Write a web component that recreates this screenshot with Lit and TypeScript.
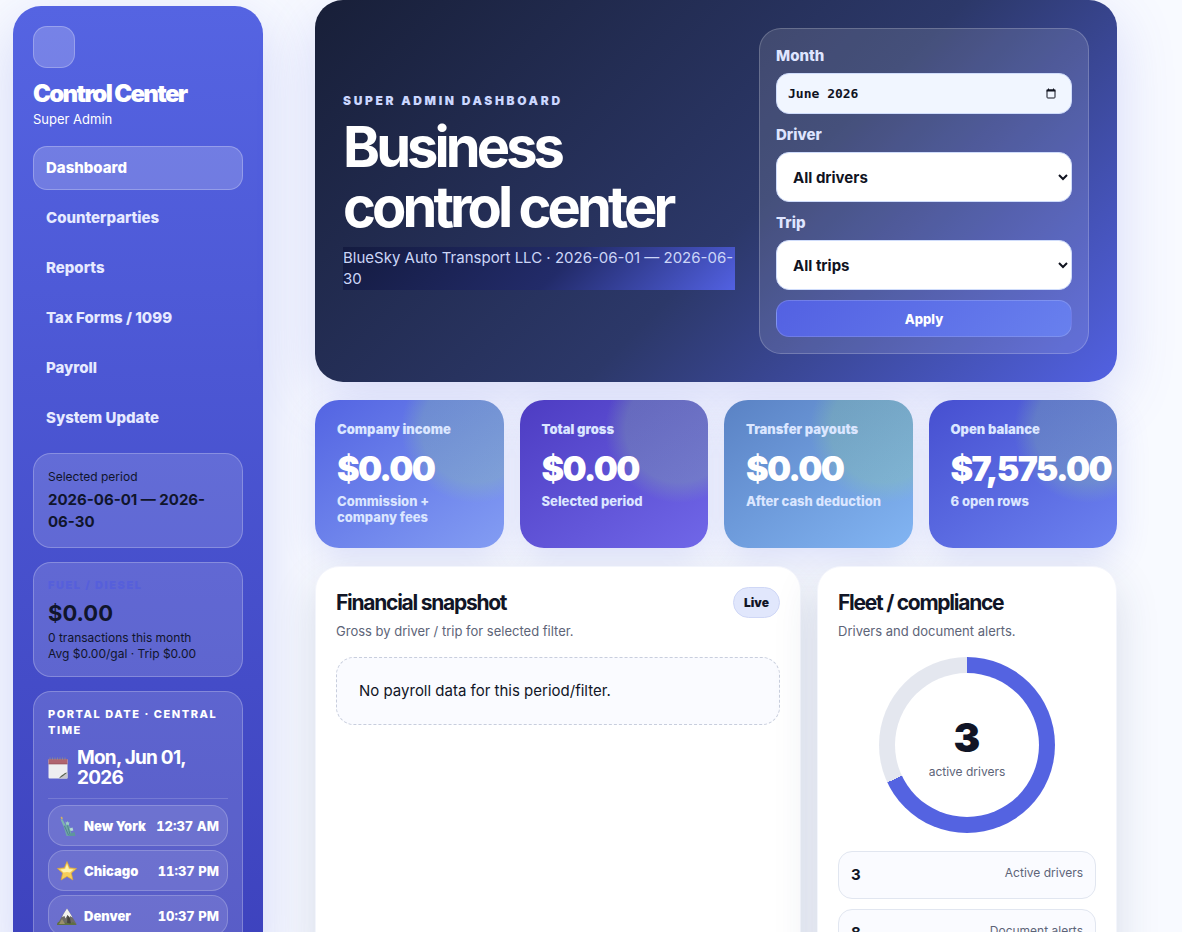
import { LitElement, html, css, svg } from "lit";
import { customElement, state } from "lit/decorators.js";
import { classMap } from "lit/directives/class-map.js";

const calendarIcon = html`<svg class="cal" viewBox="0 0 20 22" aria-hidden="true">
  <rect x="0.500" y="2" width="19" height="19.500" rx="1" fill="#eeeef0" />
  <path d="M.5 2h19v5H.5z" fill="#b0646f" />
  <path d="M.5 7h19" stroke="#8f4652" stroke-width="0.6" />
  <path d="M2 0.500v2.500M4.500 0.500v2.500M7 0.500v2.500M9.500 0.500v2.500M12 0.500v2.500M14.500 0.500v2.500M17 0.500v2.500" stroke="#8b8494" stroke-width="1" />
  <path d="M11 21.500c1-3 4-2 8.500-6v6z" fill="#c6c6cc" />
  <path d="M11 21.500c2-1 5-3 8.500-6l-2.500.4C15 17.500 12.500 18.500 11 21.500z" fill="#55604e" />
</svg>`;

const pickerIcon = html`<svg class="picker" viewBox="0 0 10 11" aria-hidden="true">
  <rect x="1" y="2" width="8" height="8" rx="0.800" fill="none" stroke="#10131f" stroke-width="1" />
  <path d="M.6 1.500h8.800v2H.6zM2 .5h1v1H2zM7 .5h1v1H7z" fill="#10131f" />
</svg>`;

const icons: Record<string, unknown> = {
  liberty: svg`
    <path d="M3.500 1.500l1.500-1 .8 2-1 1.200z" fill="#d8b25c"/>
    <path d="M3.500 3.500l2-.2L8.500 9l-2 1.300z" fill="#7fb3b0"/>
    <path d="M8.500 5.500l1.200 1 .8-1.500.6 1.500 1.300-.5-.6 3.200-2.600.4z" fill="#9accc4"/>
    <path d="M6.300 9.500l4-1 3 2.500 1.500 9H9.500z" fill="#6fa5a8"/>
    <path d="M7.500 10l4 9M10.500 9.500l2.500 9" stroke="#4a7a86" stroke-width=".8"/>
    <path d="M12.500 12.500l3-1 .8 3-2.600.6z" fill="#b4dcd2"/>
    <path d="M13.500 17.500l4-1.500 1 4-8 .2z" fill="#5e969c"/>`,
  star: svg`
    <path d="M10 .5l2.700 6.300 6.900.7-5.200 4.600 1.500 6.900L10 15.400 4.100 19l1.500-6.900L.4 7.500l6.900-.7z" fill="#f7cf58" stroke="#d9a53b" stroke-width=".7" stroke-linejoin="round"/>
    <path d="M10 3l1.900 4.900 4.600.6-3.700 3-2.800-.5-3.400.6-3.200-3 4.700-.7z" fill="#fff3b0"/>`,
  mountain: svg`
    <path d="M.5 18L7 7l3-4.500L13.500 8 19.500 18z" fill="#6d6a66"/>
    <path d="M10 2.500L6.500 8 5 11l2.500-1 1 2.500L10.500 9l2 3 .5-2 2.500 1.500L13.500 8z" fill="#f2f1ee"/>
    <path d="M10.500 9l-.5 9h4l-1-6z" fill="#45433f"/>
    <path d="M0 19c0-3 2-4 4-3l2 1.500 3-1 4 1 3-1.500 4 3z" fill="#5f7040"/>
    <path d="M2 18l3-5 3 5z" fill="#9a8f6c"/>`,
};

@customElement("app-root")
export class AppRoot extends LitElement {
  @state() private current = "Dashboard";

  private nav = ["Dashboard", "Counterparties", "Reports", "Tax Forms / 1099", "Payroll", "System Update"];
  private clocks = [
    { icon: "liberty", city: "New York", time: "12:37 AM" },
    { icon: "star", city: "Chicago", time: "11:37 PM" },
    { icon: "mountain", city: "Denver", time: "10:37 PM" },
  ];
  private stats = [
    { tone: "blue", label: "Company income", value: "$0.00", note: "Commission + company fees" },
    { tone: "violet", label: "Total gross", value: "$0.00", note: "Selected period" },
    { tone: "sky", label: "Transfer payouts", value: "$0.00", note: "After cash deduction" },
    { tone: "indigo", label: "Open balance", value: "$7,575.00", note: "6 open rows" },
  ];
  private fleet = [
    { count: "3", label: "Active drivers" },
    { count: "8", label: "Document alerts" },
  ];

  static styles = css`
    :host {
      display: grid;
      grid-template-columns: 250px minmax(0, 1fr);
      gap: 52px;
      height: 100vh;
      overflow: hidden;
      box-sizing: border-box;
      padding: 0 65px 0 13px;
      background: #f8faff;
      color: #111526;
      font-family: Inter, "Liberation Sans", sans-serif;
      font-size: 15px;
      line-height: 22px;
    }
    *, *::before { box-sizing: border-box; }
    h1, h2, p, dl, dd, dt, ul { margin: 0; padding: 0; }
    ul { list-style: none; }

    .sidebar {
      height: max-content;
      min-height: 100vh;
      margin-top: 6px;
      padding: 20px;
      border-radius: 28px;
      color: #fff;
      background: linear-gradient(180deg, #5564e2 0, #3d42bd 960px);
      box-shadow: 0 18px 60px rgba(79, 92, 220, 0.22);
    }
    .logo {
      width: 42px;
      height: 42px;
      border-radius: 14px;
      border: 1px solid rgba(255, 255, 255, 0.25);
      background: rgba(255, 255, 255, 0.2);
    }
    .brand { margin-top: 12px; font-size: 24px; line-height: 28px; font-weight: 900; letter-spacing: -0.07em; }
    .role { margin-top: 2px; font-size: 13px; line-height: 18px; }
    nav { display: grid; gap: 6px; margin-top: 18px; }
    nav a {
      display: flex;
      align-items: center;
      height: 44px;
      padding: 0 12px;
      border: 1px solid transparent;
      border-radius: 14px;
      color: #e6eaff;
      font-weight: 800;
      text-decoration: none;
    }
    nav a.active { color: #fff; background: rgba(255, 255, 255, 0.19); border-color: rgba(255, 255, 255, 0.25); }

    .box {
      margin-top: 14px;
      padding: 14px;
      border: 1px solid rgba(255, 255, 255, 0.24);
      border-radius: 18px;
      background: rgba(255, 255, 255, 0.14);
      color: #10152c;
    }
    .box.period { margin-top: 13px; }
    .small { font-size: 12px; line-height: 17px; }
    .period strong { display: block; margin-top: 4px; font-weight: 700; }
    .fuel-label { font-size: 11px; line-height: 16px; font-weight: 900; letter-spacing: 0.14em; color: #565fdb; }
    .fuel-value { margin-top: 4px; font-size: 22px; line-height: 32px; font-weight: 700; }
    .fuel-note { font-size: 12px; line-height: 16px; }
    .fuel-value + .fuel-note { margin-top: 1px; }
    .portal { color: #fff; }
    .portal-label { font-size: 11px; line-height: 16px; font-weight: 800; letter-spacing: 0.14em; }
    .date { display: flex; align-items: center; gap: 9px; margin-top: 10px; font-size: 19px; line-height: 20px; font-weight: 700; letter-spacing: -0.04em; }
    .cal { flex: none; width: 20px; height: 22px; }
    .clocks { display: grid; gap: 4px; margin-top: 10px; padding-top: 6px; border-top: 1px solid rgba(255, 255, 255, 0.16); }
    .clocks li {
      display: flex;
      align-items: center;
      height: 41px;
      padding: 0 8px;
      border: 1px solid rgba(255, 255, 255, 0.2);
      border-radius: 16px;
      background: rgba(255, 255, 255, 0.11);
      font-size: 13px;
      font-weight: 800;
      white-space: nowrap;
    }
    .clocks svg { width: 20px; height: 20px; margin-right: 7px; }
    .clocks span { font-weight: 900; }
    .clocks time { margin-left: auto; font-variant-numeric: tabular-nums; }

    main { display: grid; align-content: start; gap: 18px; }
    .hero {
      display: grid;
      grid-template-columns: minmax(0, 1fr) 330px;
      gap: 24px;
      align-items: center;
      padding: 28px;
      border-radius: 28px;
      background: linear-gradient(135deg, #181f38 0%, #2c3869 55%, #5261e2 100%);
      box-shadow: 0 18px 60px rgba(79, 92, 220, 0.2);
    }
    .eyebrow { font-size: 12px; line-height: 16px; font-weight: 900; letter-spacing: 0.22em; color: #cbd7ff; }
    h1 { margin-top: 8px; font-size: 56px; line-height: 60px; font-weight: 700; letter-spacing: -0.07em; color: #fff; }
    .company { margin-top: 10px; padding-bottom: 1px; color: #ccd6f7; background: linear-gradient(135deg, #141b40 0%, #222b69 55%, #5261e2 100%); }
    .company p { line-height: 21px; }
    form {
      display: grid;
      padding: 16px;
      border: 1px solid rgba(255, 255, 255, 0.2);
      border-radius: 22px;
      background: rgba(255, 255, 255, 0.12);
    }
    label { margin-bottom: 6px; font-weight: 800; color: #dfe5ff; }
    .month, select {
      width: 100%;
      margin-bottom: 10px;
      border: 1px solid #cfdcfb;
      border-radius: 13px;
      color: #10131f;
      background-color: #fff;
      font: 700 15px Inter, sans-serif;
    }
    .month { display: flex; align-items: center; height: 41px; padding: 0 15px 0 11px; background-color: #f1f6ff; }
    .month input {
      flex: 1;
      min-width: 0;
      padding: 0 0 1px;
      border: 0;
      outline: 0;
      color: inherit;
      background: none;
      font: 700 13px "DejaVu Sans Mono", monospace;
    }
    .picker { width: 10px; height: 11px; }
    select { height: 50px; padding: 0 0 0 12px; }
    button {
      height: 37px;
      border: 1px solid rgba(255, 255, 255, 0.16);
      border-radius: 13px;
      color: #fff;
      background: linear-gradient(135deg, #5361e2, #6880ee);
      font: 800 13px Inter, sans-serif;
    }

    .stats { display: grid; grid-template-columns: repeat(4, minmax(0, 1fr)); gap: 16px; }
    .lift { display: grid; border-radius: 24px; box-shadow: 0 12px 34px rgba(79, 92, 220, 0.16); }
    .stat {
      position: relative;
      overflow: hidden;
      padding: 21px 22px 23px;
      border-radius: 24px;
      color: #dbe6ff;
      font-size: 13px;
      line-height: 16px;
      font-weight: 800;
    }
    .stat::before {
      content: "";
      position: absolute;
      top: -45px;
      right: -45px;
      width: 148px;
      height: 148px;
      border-radius: 50%;
      background: radial-gradient(closest-side, rgba(150, 215, 140, 0.23) 72%, rgba(150, 215, 140, 0) 100%);
    }
    .stat > * { position: relative; }
    .stat-label { font-weight: 900; }
    .stat-value { margin: 11px 0 3px; font-size: 34px; line-height: 42px; font-weight: 900; letter-spacing: -0.05em; color: #fff; }
    .blue { background: linear-gradient(145deg, #5364e2, #839df3); }
    .violet { background: linear-gradient(145deg, #4d3cc2, #7067e8); }
    .sky { background: linear-gradient(145deg, #5a82c4, #82b5f3); }
    .indigo { background: linear-gradient(145deg, #464fd0, #6c82f0); }

    .panels { display: grid; grid-template-columns: minmax(0, 1fr) 300px; gap: 16px; }
    .panel {
      min-height: 440px;
      padding: 20px;
      border: 1px solid #f3f5fc;
      border-radius: 24px;
      background: #fff;
      box-shadow: 0 16px 44px rgba(40, 60, 110, 0.15);
    }
    .head { display: flex; justify-content: space-between; align-items: center; }
    h2 { font-size: 21px; line-height: 31px; font-weight: 700; letter-spacing: -0.06em; }
    .live { padding: 0 10px; border: 1px solid #cfd7f6; border-radius: 16px; background: #e1e7fc; font-size: 12px; line-height: 29px; font-weight: 900; }
    .sub { margin: 5px 0 17px; font-size: 13px; line-height: 17px; color: #5d6478; }
    .empty { padding: 22px; border: 1px dashed #c8cedd; border-radius: 18px; background: #fafbff; }
    .donut {
      display: grid;
      place-items: center;
      width: 176px;
      height: 176px;
      margin: 0 auto 18px;
      border-radius: 50%;
      background: conic-gradient(#5463e1 0 68%, #e4e7ef 68% 100%);
    }
    .hole {
      display: grid;
      align-content: center;
      width: 144px;
      height: 144px;
      padding-top: 5px;
      border-radius: 50%;
      background: #fff;
      text-align: center;
      font-size: 12px;
      line-height: 20px;
      color: #5d6478;
    }
    .hole strong { font-size: 40px; line-height: 48px; font-weight: 900; color: #111526; }
    .rows { display: grid; gap: 10px; }
    .rows > div { display: flex; justify-content: space-between; height: 48px; padding: 12px; border: 1px solid #e1e6f0; border-radius: 14px; background: #fafbff; }
    .rows dd { order: -1; font-weight: 700; }
    .rows dt { font-size: 12px; line-height: 18px; color: #5d6478; }
  `;

  private go(e: Event, name: string) {
    e.preventDefault();
    this.current = name;
  }

  render() {
    return html`
      <aside class="sidebar">
        <div class="logo"></div>
        <p class="brand">Control Center</p>
        <p class="role">Super Admin</p>
        <nav aria-label="Main">
          ${this.nav.map(
            (n) => html`<a href="#" class=${classMap({ active: n === this.current })} @click=${(e: Event) => this.go(e, n)}>${n}</a>`
          )}
        </nav>
        <section class="box period">
          <p class="small">Selected period</p>
          <strong>2026-06-01 — 2026-06-30</strong>
        </section>
        <section class="box">
          <p class="fuel-label">FUEL / DIESEL</p>
          <p class="fuel-value">$0.00</p>
          <p class="fuel-note">0 transactions this month</p>
          <p class="fuel-note">Avg $0.00/gal · Trip $0.00</p>
        </section>
        <section class="box portal">
          <p class="portal-label">PORTAL DATE · CENTRAL TIME</p>
          <div class="date">${calendarIcon}<span>Mon, Jun 01, 2026</span></div>
          <ul class="clocks">
            ${this.clocks.map(
              (c) => html`<li><svg viewBox="0 0 20 20" aria-hidden="true">${icons[c.icon]}</svg><span>${c.city}</span><time>${c.time}</time></li>`
            )}
          </ul>
        </section>
      </aside>
      <main>
        <header class="hero">
          <div>
            <p class="eyebrow">SUPER ADMIN DASHBOARD</p>
            <h1>Business control center</h1>
            <div class="company"><p>BlueSky Auto Transport LLC · 2026-06-01 — 2026-06-30</p></div>
          </div>
          <form @submit=${(e: Event) => e.preventDefault()}>
            <label for="month">Month</label>
            <div class="month"><input id="month" type="text" value="June 2026" />${pickerIcon}</div>
            <label for="driver">Driver</label>
            <select id="driver"><option>All drivers</option></select>
            <label for="trip">Trip</label>
            <select id="trip"><option>All trips</option></select>
            <button type="submit">Apply</button>
          </form>
        </header>
        <section class="stats">
          ${this.stats.map(
            (s) => html`<div class="lift"><article class="stat ${s.tone}">
              <p class="stat-label">${s.label}</p>
              <p class="stat-value">${s.value}</p>
              <p>${s.note}</p>
            </article></div>`
          )}
        </section>
        <div class="panels">
          <section class="panel">
            <div class="head"><h2>Financial snapshot</h2><span class="live">Live</span></div>
            <p class="sub">Gross by driver / trip for selected filter.</p>
            <p class="empty">No payroll data for this period/filter.</p>
          </section>
          <section class="panel">
            <div class="head"><h2>Fleet / compliance</h2></div>
            <p class="sub">Drivers and document alerts.</p>
            <div class="donut"><div class="hole"><strong>3</strong><span>active drivers</span></div></div>
            <dl class="rows">
              ${this.fleet.map((f) => html`<div><dt>${f.label}</dt><dd>${f.count}</dd></div>`)}
            </dl>
          </section>
        </div>
      </main>
    `;
  }
}
